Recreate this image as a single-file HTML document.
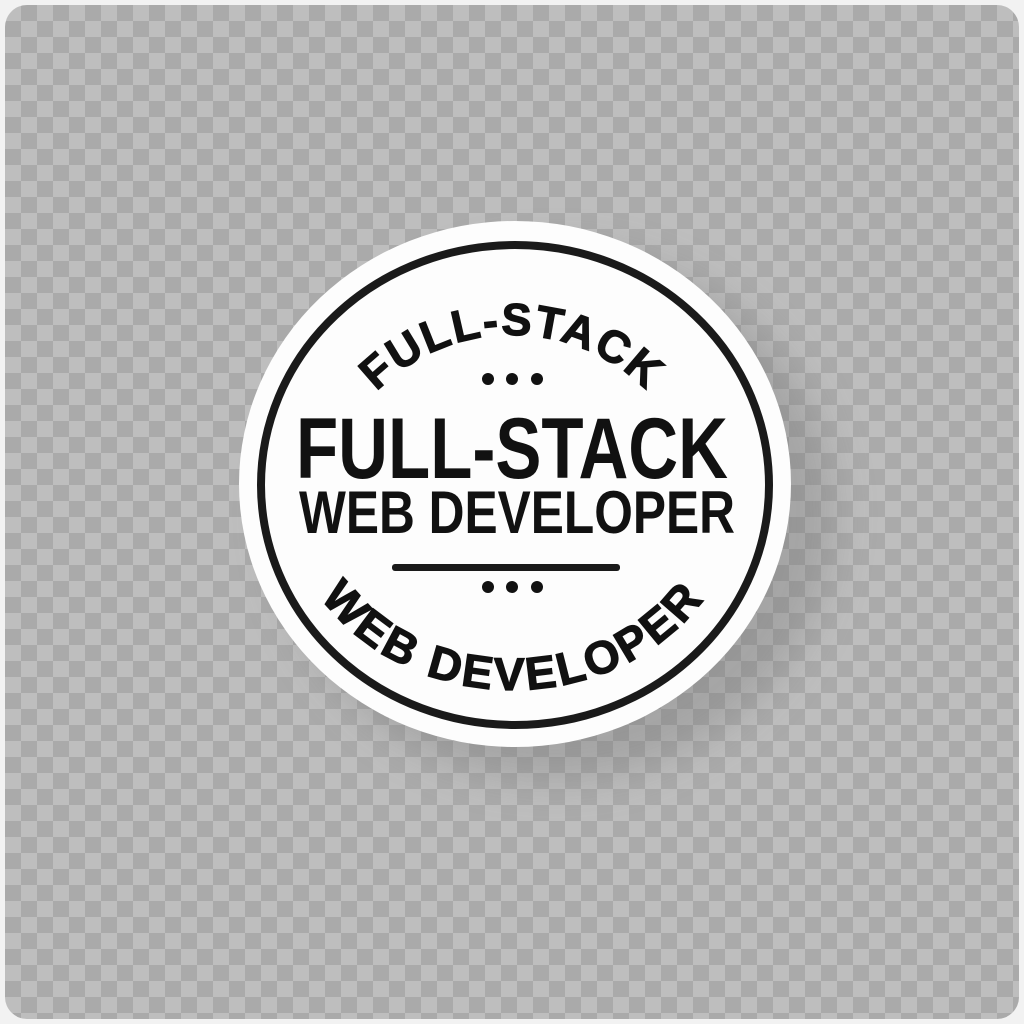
<!DOCTYPE html>
<html><head><style>
html,body{margin:0;padding:0;width:1024px;height:1024px;background:#f2f2f2;overflow:hidden}
.frame{position:absolute;left:5px;top:5px;width:1014px;height:1014px;border-radius:22px;
background-color:#bebebe;
background-image:linear-gradient(45deg,#aaaaaa 25%,transparent 25%,transparent 75%,#aaaaaa 75%),linear-gradient(45deg,#aaaaaa 25%,transparent 25%,transparent 75%,#aaaaaa 75%);
background-size:32px 32px;background-position:0 0,16px 16px}
.shadow{position:absolute;left:275px;top:250px;width:560px;height:530px;border-radius:50%;background:rgba(100,100,100,.28);filter:blur(20px)}
svg{position:absolute;left:0;top:0}
text{font-family:"Liberation Sans",sans-serif;font-weight:bold;fill:#111}
.arc{stroke:#111;stroke-width:1.2}
</style></head><body>
<div class="frame"></div>
<div class="shadow"></div>
<svg width="1024" height="1024" viewBox="0 0 1024 1024">
<defs>
<path id="top" d="M322,525 A190,190 0 0 1 702,525"/>
<path id="bot" d="M285,490 A228,200 0 0 0 741,490"/>
</defs>
<ellipse cx="515" cy="484" rx="276" ry="263" fill="#fdfdfd"/>
<ellipse cx="515" cy="485" rx="254" ry="240" fill="none" stroke="#1a1a1a" stroke-width="8"/>
<text class="arc" font-size="45" letter-spacing="2"><textPath href="#top" startOffset="50%" text-anchor="middle">FULL-STACK</textPath></text>
<text class="arc" font-size="46" letter-spacing="3"><textPath href="#bot" startOffset="50%" text-anchor="middle">WEB DEVELOPER</textPath></text>
<g fill="#111"><circle cx="488" cy="379" r="6"/><circle cx="512" cy="379" r="6"/><circle cx="537" cy="379" r="6"/>
<circle cx="488" cy="587" r="6"/><circle cx="512" cy="587" r="6"/><circle cx="537" cy="587" r="6"/></g>
<rect x="392" y="564" width="228" height="7" rx="3" fill="#1a1a1a"/>
<text x="512" y="478" font-size="86" text-anchor="middle" textLength="432" lengthAdjust="spacingAndGlyphs">FULL-STACK</text>
<text x="517" y="533" font-size="60" text-anchor="middle" textLength="436" lengthAdjust="spacingAndGlyphs">WEB DEVELOPER</text>
</svg>
</body></html>
